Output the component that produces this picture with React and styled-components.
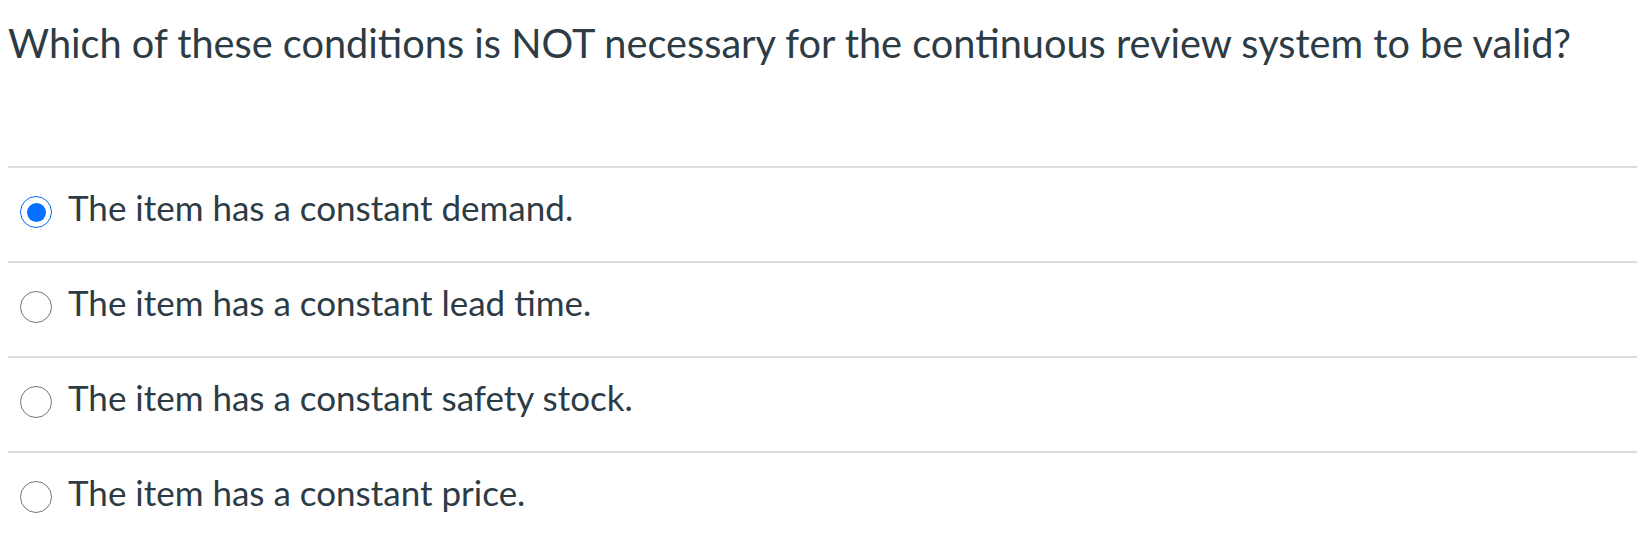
import React from 'react'
import styled, { createGlobalStyle } from 'styled-components'

const Global = createGlobalStyle`
body {
    margin: 0;
    background: #fff;
    font-family: Lato, "Noto Sans", sans-serif;
    color: #2d3b45;
}
`

const options = [
    { text: 'The item has a constant demand.', checked: true },
    { text: 'The item has a constant lead time.', checked: false },
    { text: 'The item has a constant safety stock.', checked: false },
    { text: 'The item has a constant price.', checked: false },
]

const App = () => {
    return (
        <Wrap>
            <Global />
            <Question>Which of these conditions is NOT necessary for the continuous review system to be valid?</Question>
            <Answers>
                {options.map((o) => (
                    <Answer key={o.text}>
                        <Radio checked={o.checked} />
                        <Label>{o.text}</Label>
                    </Answer>
                ))}
            </Answers>
        </Wrap>
    )
}

export default App

const Wrap = styled.div`
width: 1637px;
height: 545px;
overflow: hidden;
`
const Question = styled.div`
font-size: 39.7px;
line-height: 1.2;
padding: 19px 0 0 8px;
height: 166px;
box-sizing: border-box;
white-space: nowrap;
`
const Answers = styled.div`
margin-left: 8px;
`
const Answer = styled.div`
display: flex;
align-items: flex-start;
height: 95px;
box-sizing: border-box;
border-top: 2px solid #dcdcdc;
padding-top: 18px;
`
const Radio = styled.span`
width: 32px;
height: 32px;
box-sizing: border-box;
border-radius: 50%;
margin: 10px 16px 0 12px;
flex-shrink: 0;
border: ${(p) => (p.checked ? '1.5px solid #0770ff' : '1.3px solid #777')};
display: flex;
align-items: center;
justify-content: center;
&::after {
    content: '';
    display: ${(p) => (p.checked ? 'block' : 'none')};
    width: 19px;
    height: 19px;
    border-radius: 50%;
    background: #0770ff;
}
`
const Label = styled.span`
font-size: 35px;
line-height: 1.2;
`
